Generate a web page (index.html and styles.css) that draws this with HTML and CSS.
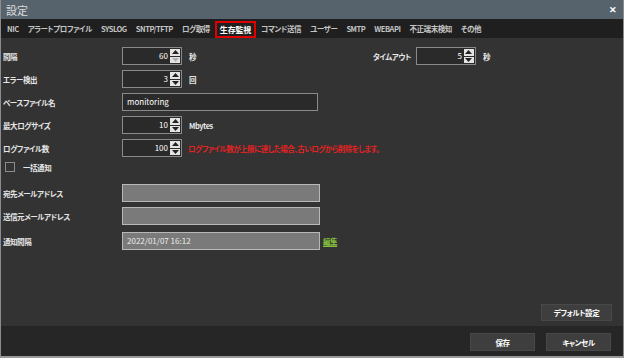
FILE: index.html
```html
<!DOCTYPE html>
<html lang="ja">
<head>
    <meta charset="UTF-8">
    <meta name="viewport" content="width=device-width, initial-scale=1.0">
    <title>設定</title>
    <link rel="stylesheet" href="styles.css">
</head>
<body>

    <div class="window">
        <!-- タイトルバー -->
        <div class="titlebar">
            <span class="title">設定</span>
            <span class="close">✕</span>
        </div>

        <!-- タブ -->
        <div class="tabs">
            <span class="tab">NIC</span>
            <span class="tab">アラートプロファイル</span>
            <span class="tab">SYSLOG</span>
            <span class="tab">SNTP/TFTP</span>
            <span class="tab">ログ取得</span>
            <span class="tab active">生存監視</span>
            <span class="tab">コマンド送信</span>
            <span class="tab">ユーザー</span>
            <span class="tab">SMTP</span>
            <span class="tab">WEBAPI</span>
            <span class="tab">不正端末検知</span>
            <span class="tab">その他</span>
        </div>

        <!-- 本体 -->
        <div class="content">
            <div class="form">
                <div class="row">
                    <span class="label">間隔</span>
                    <div class="spinner">
                        <span class="spinner-value">60</span>
                        <div class="spin">
                            <span class="spin-btn"><svg width="7" height="4" viewBox="0 0 7 4"><path d="M0 4 L3.5 0 L7 4 Z" fill="#222"/></svg></span>
                            <span class="spin-btn"><svg width="7" height="4" viewBox="0 0 7 4"><path d="M0 0 L3.5 4 L7 0 Z" fill="#b0b0b0"/></svg></span>
                        </div>
                    </div>
                    <span class="unit">秒</span>

                    <div class="timeout">
                        <span class="timeout-label">タイムアウト</span>
                        <div class="spinner">
                            <span class="spinner-value">5</span>
                            <div class="spin">
                                <span class="spin-btn"><svg width="7" height="4" viewBox="0 0 7 4"><path d="M0 4 L3.5 0 L7 4 Z" fill="#222"/></svg></span>
                                <span class="spin-btn"><svg width="7" height="4" viewBox="0 0 7 4"><path d="M0 0 L3.5 4 L7 0 Z" fill="#222"/></svg></span>
                            </div>
                        </div>
                        <span class="unit">秒</span>
                    </div>
                </div>

                <div class="row">
                    <span class="label">エラー検出</span>
                    <div class="spinner">
                        <span class="spinner-value">3</span>
                        <div class="spin">
                            <span class="spin-btn"><svg width="7" height="4" viewBox="0 0 7 4"><path d="M0 4 L3.5 0 L7 4 Z" fill="#222"/></svg></span>
                            <span class="spin-btn"><svg width="7" height="4" viewBox="0 0 7 4"><path d="M0 0 L3.5 4 L7 0 Z" fill="#222"/></svg></span>
                        </div>
                    </div>
                    <span class="unit">回</span>
                </div>

                <div class="row">
                    <span class="label">ベースファイル名</span>
                    <div class="text-field">monitoring</div>
                </div>

                <div class="row">
                    <span class="label">最大ログサイズ</span>
                    <div class="spinner">
                        <span class="spinner-value">10</span>
                        <div class="spin">
                            <span class="spin-btn"><svg width="7" height="4" viewBox="0 0 7 4"><path d="M0 4 L3.5 0 L7 4 Z" fill="#222"/></svg></span>
                            <span class="spin-btn"><svg width="7" height="4" viewBox="0 0 7 4"><path d="M0 0 L3.5 4 L7 0 Z" fill="#222"/></svg></span>
                        </div>
                    </div>
                    <span class="unit">Mbytes</span>
                </div>

                <div class="row">
                    <span class="label">ログファイル数</span>
                    <div class="spinner">
                        <span class="spinner-value">100</span>
                        <div class="spin">
                            <span class="spin-btn"><svg width="7" height="4" viewBox="0 0 7 4"><path d="M0 4 L3.5 0 L7 4 Z" fill="#222"/></svg></span>
                            <span class="spin-btn"><svg width="7" height="4" viewBox="0 0 7 4"><path d="M0 0 L3.5 4 L7 0 Z" fill="#222"/></svg></span>
                        </div>
                    </div>
                    <span class="unit warning">ログファイル数が上限に達した場合、古いログから削除をします。</span>
                </div>

                <div class="row check-row">
                    <span class="checkbox"></span>
                    <span class="check-label">一括通知</span>
                </div>

                <div class="row mail-row">
                    <span class="label">宛先メールアドレス</span>
                    <div class="text-field disabled"></div>
                </div>

                <div class="row">
                    <span class="label">送信元メールアドレス</span>
                    <div class="text-field disabled"></div>
                </div>

                <div class="row interval-row">
                    <span class="label">通知間隔</span>
                    <div class="text-field disabled">2022/01/07 16:12</div>
                    <a class="edit-link">編集</a>
                </div>
            </div>

            <div class="content-actions">
                <button class="btn btn-default">デフォルト設定</button>
            </div>
        </div>

        <!-- フッター -->
        <div class="footer">
            <button class="btn">保存</button>
            <button class="btn">キャンセル</button>
        </div>
    </div>

</body>
</html>
```

FILE: styles.css
```css
/* リセット */
* {
    margin: 0;
    padding: 0;
    box-sizing: border-box;
}

body {
    font-family: "Noto Sans CJK JP", "Noto Sans", sans-serif;
    font-feature-settings: "palt" 1;
    font-size: 7.5px;
    letter-spacing: -0.45px;
    color: #e6e6e6;
    background-color: #333;
    width: 624px;
    height: 358px;
    overflow: hidden;
}

.window {
    width: 624px;
    height: 358px;
    display: flex;
    flex-direction: column;
    border-left: 1px solid #8c8c8c;
    border-right: 1px solid #8c8c8c;
    border-bottom: 2px solid #9a9a9a;
}

/* タイトルバー */
.titlebar {
    height: 19px;
    flex-shrink: 0;
    background-color: #57636c;
    display: flex;
    align-items: center;
    justify-content: space-between;
    padding: 0 6px 0 5px;
}

.title {
    font-size: 11px;
    letter-spacing: 0;
    color: #dcdcdc;
}

.close {
    font-size: 9px;
    font-weight: bold;
    color: #fff;
}

/* タブ */
.tabs {
    height: 19px;
    flex-shrink: 0;
    background-color: #1f1f1f;
    display: flex;
    align-items: center;
    gap: 9px;
    padding-left: 6px;
}

.tab {
    color: #c4c4c4;
    font-weight: bold;
    white-space: nowrap;
}

.tab.active {
    color: #fff;
    font-size: 8px;
    letter-spacing: -0.2px;
    border: 2px solid #e00000;
    padding: 0 3px;
    margin: 2px -4px 0;
    height: 17px;
    line-height: 13px;
    align-self: flex-end;
}

/* 本体 */
.content {
    flex-grow: 1;
    display: flex;
    flex-direction: column;
    background-color: #333;
}

.form {
    flex-grow: 1;
    padding: 9px 0 0 2px;
}

.row {
    display: flex;
    align-items: center;
    height: 18px;
    margin-top: 5px;
}

.row:first-child {
    margin-top: 0;
}

.label {
    width: 119px;
    flex-shrink: 0;
    font-weight: bold;
    white-space: nowrap;
}

.spinner {
    width: 60px;
    height: 18px;
    border: 1px solid #8a8a8a;
    background-color: #2a2a2a;
    display: flex;
    letter-spacing: 0;
}

.spinner-value {
    flex-grow: 1;
    text-align: right;
    padding-right: 2px;
    line-height: 16px;
    font-size: 8px;
    color: #fff;
}

.spin {
    width: 11px;
    display: flex;
    flex-direction: column;
    gap: 1px;
    padding: 1px 1px 1px 0;
}

.spin-btn {
    flex-grow: 1;
    background-color: #e4e4e4;
    display: flex;
    align-items: center;
    justify-content: center;
}

.spin-btn svg {
    display: block;
}

.unit {
    margin-left: 7px;
    font-weight: bold;
    white-space: nowrap;
}

.unit.warning {
    margin-left: 6px;
    color: #e42222;
    letter-spacing: -0.55px;
}

.timeout {
    display: flex;
    align-items: center;
    margin-left: auto;
    margin-right: 133px;
}

.timeout-label {
    margin-right: 5px;
    font-weight: bold;
}

.text-field {
    width: 196px;
    height: 18px;
    border: 1px solid #8a8a8a;
    background-color: #2a2a2a;
    padding-left: 4px;
    line-height: 16px;
    font-size: 8px;
    letter-spacing: 0;
    color: #fff;
}

.text-field.disabled {
    width: 198px;
    background-color: #7a7a7a;
    border-color: #b8b8b8;
    color: #ececec;
}

.check-row {
    height: 12px;
    margin-top: 4px;
    padding-left: 2px;
}

.checkbox {
    width: 10px;
    height: 10px;
    border: 1px solid #8c8c8c;
}

.check-label {
    margin-left: 8px;
    font-weight: bold;
}

.mail-row {
    margin-top: 11px;
}

.interval-row {
    margin-top: 7px;
}

.edit-link {
    margin-left: 3px;
    color: #86c13d;
    font-weight: bold;
    text-decoration: underline;
}

/* ボタン */
.btn {
    font-family: inherit;
    font-feature-settings: "palt" 1;
    font-size: 7.5px;
    letter-spacing: -0.45px;
    font-weight: bold;
    color: #fff;
    background-color: #3e3e3e;
    border: 1px solid #484848;
    height: 18px;
    width: 65px;
}

.content-actions {
    display: flex;
    justify-content: flex-end;
    padding: 0 11px 5px 0;
}

.btn-default {
    width: 71px;
    height: 17px;
}

.footer {
    height: 30px;
    flex-shrink: 0;
    background-color: #262626;
    display: flex;
    justify-content: flex-end;
    gap: 11px;
    padding: 7px 12px 0 0;
}
```
